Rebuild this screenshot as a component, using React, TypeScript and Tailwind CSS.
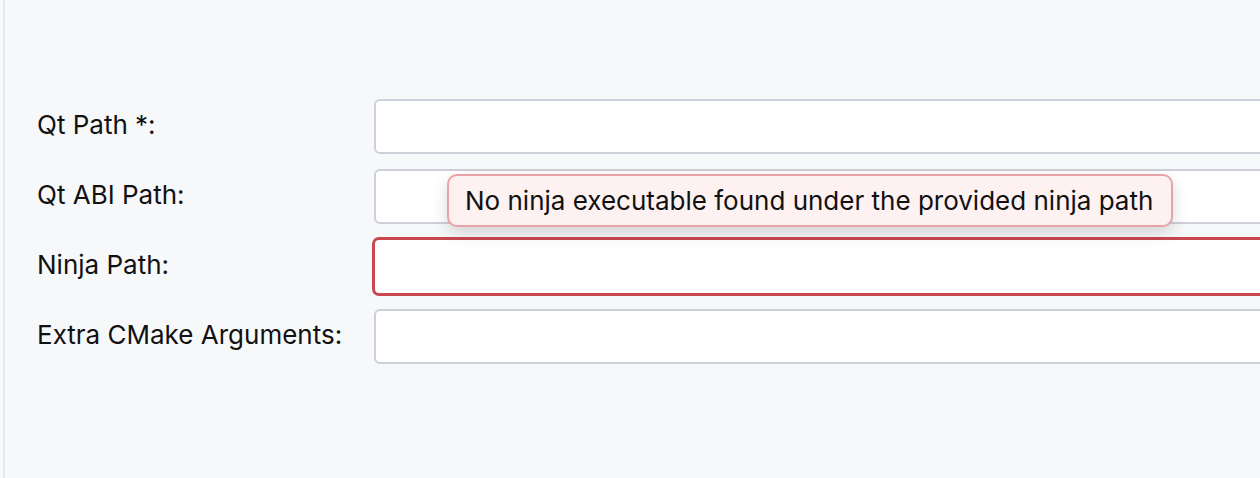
import React from "react";

const rows = [
  { label: "Qt Path *:", error: false },
  { label: "Qt ABI Path:", error: false },
  { label: "Ninja Path:", error: true },
  { label: "Extra CMake Arguments:", error: false },
];

export default function App() {
  return (
    <div
      className="w-[1260px] h-[478px] bg-[#f7f8fa] overflow-hidden flex"
      style={{ fontFamily: "Inter, 'Noto Sans', sans-serif" }}
    >
      <div className="w-[3px] bg-[#f7f8fa]" />
      <div className="w-[2px] bg-[#e8e9ec]" />
      <div className="relative flex-1 pt-[99px] pl-[32px] flex flex-col gap-[15px]">
        {rows.map((r) => (
          <div key={r.label} className="flex items-center h-[55px]">
            <div className="w-[337px] pb-[4px] text-[26px] text-[#111111] leading-none">{r.label}</div>
            {r.error ? (
              <div className="flex-1 h-[59px] -ml-[2px] -mr-[200px] rounded-[7px] border-[3px] border-[#c9474f] bg-white" />
            ) : (
              <div className="flex-1 h-[55px] -mr-[200px] rounded-[6px] border-2 border-[#cdd0d8] bg-white" />
            )}
          </div>
        ))}
        <div className="absolute left-[442px] top-[174px] h-[53px] pl-[16px] pr-[18px] flex items-center rounded-[10px] border-2 border-[#e9a3a8] bg-[#fdf1f1] shadow-[0_6px_16px_rgba(0,0,0,0.15)] text-[26px] text-[#111111] whitespace-nowrap">
          No ninja executable found under the provided ninja path
        </div>
      </div>
    </div>
  );
}
